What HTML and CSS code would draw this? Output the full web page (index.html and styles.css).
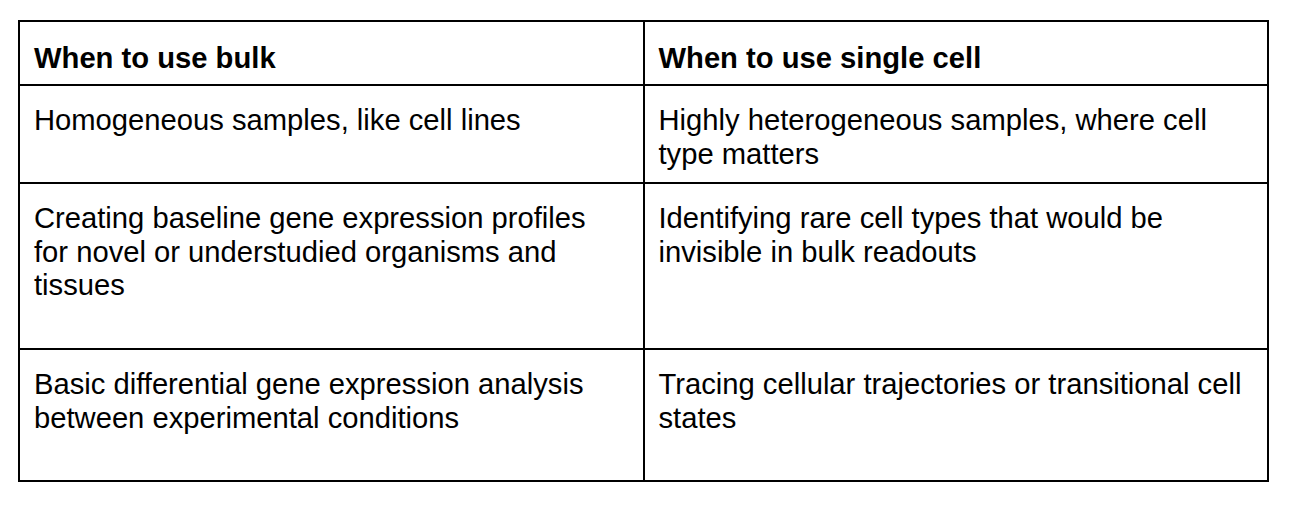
FILE: index.html
```html
<!DOCTYPE html>
<html>
<head>
<meta charset="utf-8">
<link rel="stylesheet" href="styles.css">
</head>
<body>
<table class="cmp">
  <tr class="r-head">
    <th>When to use bulk</th>
    <th>When to use single cell</th>
  </tr>
  <tr class="r1">
    <td>Homogeneous samples, like cell lines</td>
    <td>Highly heterogeneous samples, where cell type matters</td>
  </tr>
  <tr class="r2">
    <td>Creating baseline gene expression profiles for novel or understudied organisms and tissues</td>
    <td>Identifying rare cell types that would be invisible in bulk readouts</td>
  </tr>
  <tr class="r3">
    <td>Basic differential gene expression analysis between experimental conditions</td>
    <td>Tracing cellular trajectories or transitional cell states</td>
  </tr>
</table>
</body>
</html>
```

FILE: styles.css
```css
html, body {
  margin: 0;
  background: #fff;
}
body {
  padding: 20px 0 0 18px;
  font-family: "Liberation Sans", Arial, sans-serif;
  color: #000;
}
.cmp {
  border-collapse: collapse;
  width: 1251px;
  table-layout: fixed;
}
.cmp th, .cmp td {
  border: 2px solid #000;
  text-align: left;
  vertical-align: top;
  padding: 18px 20px 0 14px;
  font-size: 29.2px;
  line-height: 33.5px;
  width: 50%;
}
.cmp th {
  font-weight: bold;
  padding-top: 20px;
}
.r-head { height: 64px; }
.r1 { height: 98px; }
.r2 { height: 166px; }
.r3 { height: 132px; }
```
